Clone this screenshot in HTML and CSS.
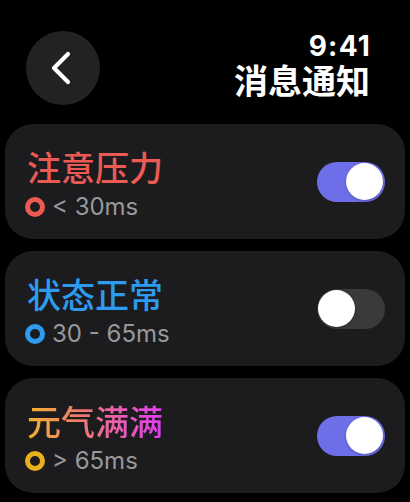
FILE: index.html
```html
<!DOCTYPE html>
<html lang="zh">
<head>
<meta charset="utf-8">
<link rel="stylesheet" href="styles.css">
</head>
<body>
<div class="screen">
  <header class="header">
    <button class="back" aria-label="返回">
      <svg width="30" height="34" viewBox="0 0 30 34"><path d="M22 3 L8 17 L22 31" fill="none" stroke="#fff" stroke-width="4.2" stroke-linecap="round" stroke-linejoin="round"/></svg>
    </button>
    <div class="titles">
      <div class="time">9:41</div>
      <div class="page-title">消息通知</div>
    </div>
  </header>
  <div class="list">
    <div class="card">
      <div class="info">
        <div class="name red">注意压力</div>
        <div class="range"><span class="ring ring-red"></span><span>&lt; 30ms</span></div>
      </div>
      <div class="toggle on"><span class="knob"></span></div>
    </div>
    <div class="card">
      <div class="info">
        <div class="name blue">状态正常</div>
        <div class="range"><span class="ring ring-blue"></span><span>30 - 65ms</span></div>
      </div>
      <div class="toggle"><span class="knob"></span></div>
    </div>
    <div class="card">
      <div class="info">
        <div class="name grad">元气满满</div>
        <div class="range"><span class="ring ring-yellow"></span><span>&gt; 65ms</span></div>
      </div>
      <div class="toggle on"><span class="knob"></span></div>
    </div>
  </div>
</div>
</body>
</html>
```
FILE: styles.css
```css
* { box-sizing: border-box; }
html, body { margin: 0; padding: 0; background: #000; }
body {
  font-family: Inter, "Noto Sans CJK SC", sans-serif;
  color: #fff;
  width: 410px;
  height: 502px;
  overflow: hidden;
}
.screen { display: flex; flex-direction: column; }
.header {
  display: flex;
  justify-content: space-between;
  align-items: flex-start;
  padding: 30px 40px 0 26px;
  height: 124px;
}
.back {
  width: 74px;
  height: 74px;
  border-radius: 50%;
  background: #222224;
  border: 0;
  padding: 0 4px 0 0;
  display: flex;
  align-items: center;
  justify-content: center;
  margin-top: 1px;
}
.titles { display: flex; flex-direction: column; align-items: flex-end; }
.time {
  font-family: Inter, sans-serif;
  font-weight: 700;
  font-size: 28px;
  line-height: 30px;
  margin-top: 1px;
  letter-spacing: 1.2px;
  margin-right: -1px;
}
.page-title {
  font-family: "Noto Sans CJK SC", sans-serif;
  font-weight: 700;
  font-size: 34px;
  line-height: 38px;
}
.list { display: flex; flex-direction: column; gap: 12px; padding: 0 5px; }
.card {
  height: 115px;
  background: #1c1c1e;
  border-radius: 28px;
  display: flex;
  align-items: center;
  justify-content: space-between;
  padding: 4px 20px 0 20px;
}
.info { display: flex; flex-direction: column; gap: 6px; }
.name {
  font-family: "Noto Sans CJK SC", sans-serif;
  font-weight: 500;
  font-size: 34px;
  line-height: 40px;
  padding-left: 2px;
}
.red { color: #ec5a54; }
.blue { color: #2d9bf0; }
.grad {
  background: linear-gradient(90deg, #f2b72a 0%, #ef7a6e 40%, #e85cb4 70%, #df3cf2 100%);
  -webkit-background-clip: text;
  background-clip: text;
  color: transparent;
}
.range {
  display: flex;
  align-items: center;
  gap: 7px;
  font-size: 24px;
  line-height: 28px;
  color: #98989c;
}
.ring {
  width: 20px;
  height: 20px;
  border-radius: 50%;
  border: 5px solid;
  flex: none;
}
.ring-red { border-color: #ec5a54; }
.ring-blue { border-color: #2d9bf0; }
.ring-yellow { border-color: #e8b01e; }
.toggle {
  width: 68px;
  height: 40px;
  border-radius: 20px;
  background: #3a3a3c;
  display: flex;
  align-items: center;
  padding: 0 2px 0 1px;
  margin-top: -4px;
}
.toggle.on { background: #6e6ee9; justify-content: flex-end; }
.knob {
  width: 37px;
  height: 37px;
  border-radius: 50%;
  background: #fff;
  box-shadow: 0 1px 3px rgba(0,0,0,0.25);
}
```
